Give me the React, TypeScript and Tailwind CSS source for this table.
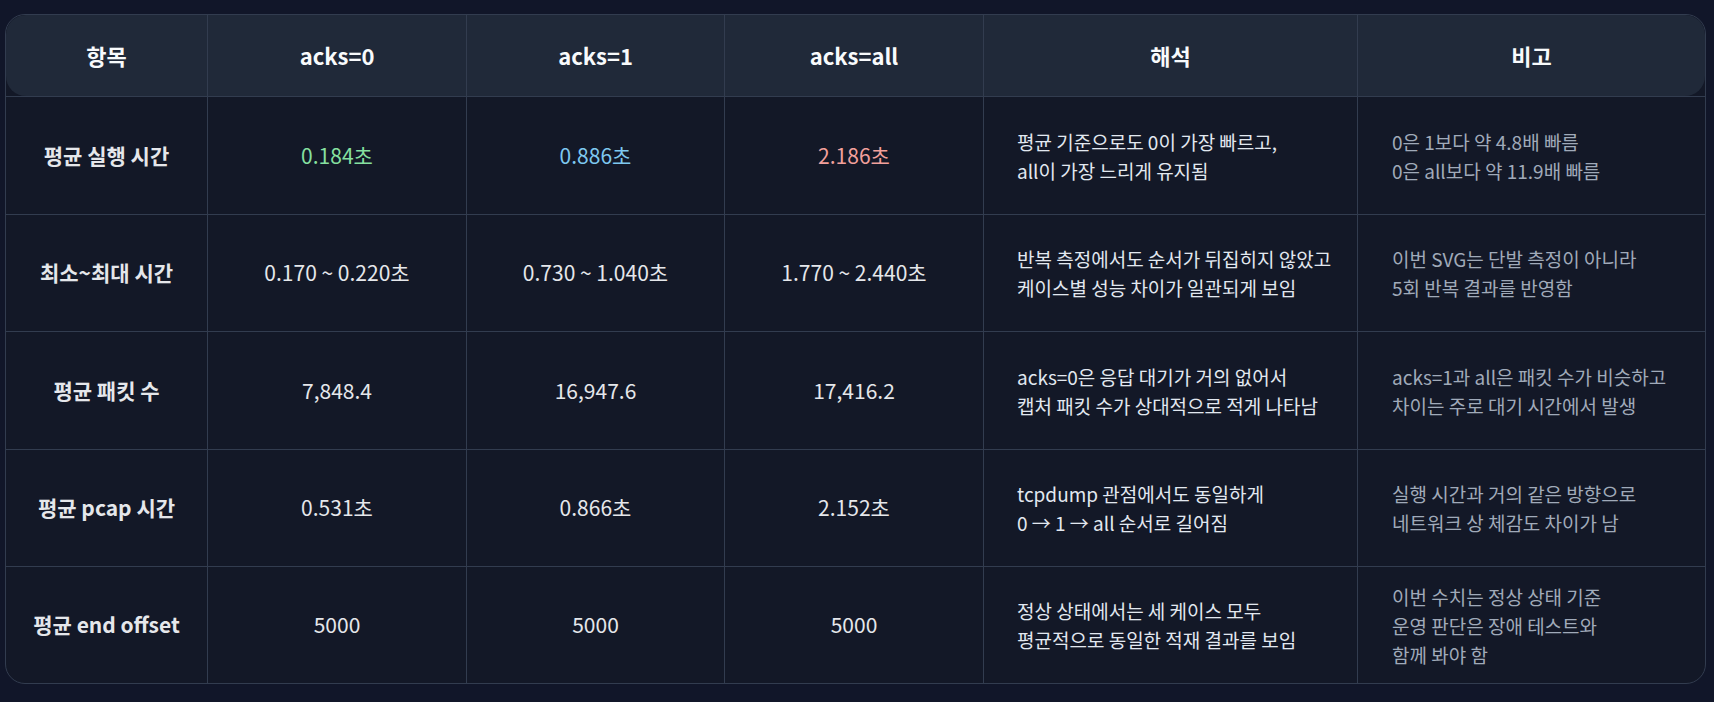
import React from "react";

type Row = {
  label: string;
  values: string[];
  tone?: string[];
  desc: string[];
  note: string[];
  h: string;
};

const ROWS: Row[] = [
  {
    label: "평균 실행 시간",
    values: ["0.184초", "0.886초", "2.186초"],
    tone: ["text-[#86e0a0]", "text-[#7ec8f0]", "text-[#f2a09c]"],
    desc: ["평균 기준으로도 0이 가장 빠르고,", "all이 가장 느리게 유지됨"],
    note: ["0은 1보다 약 4.8배 빠름", "0은 all보다 약 11.9배 빠름"],
    h: "h-[118px]",
  },
  {
    label: "최소~최대 시간",
    values: ["0.170 ~ 0.220초", "0.730 ~ 1.040초", "1.770 ~ 2.440초"],
    desc: ["반복 측정에서도 순서가 뒤집히지 않았고", "케이스별 성능 차이가 일관되게 보임"],
    note: ["이번 SVG는 단발 측정이 아니라", "5회 반복 결과를 반영함"],
    h: "h-[117px]",
  },
  {
    label: "평균 패킷 수",
    values: ["7,848.4", "16,947.6", "17,416.2"],
    desc: ["acks=0은 응답 대기가 거의 없어서", "캡처 패킷 수가 상대적으로 적게 나타남"],
    note: ["acks=1과 all은 패킷 수가 비슷하고", "차이는 주로 대기 시간에서 발생"],
    h: "h-[118px]",
  },
  {
    label: "평균 pcap 시간",
    values: ["0.531초", "0.866초", "2.152초"],
    desc: ["tcpdump 관점에서도 동일하게", "0 → 1 → all 순서로 길어짐"],
    note: ["실행 시간과 거의 같은 방향으로", "네트워크 상 체감도 차이가 남"],
    h: "h-[117px]",
  },
  {
    label: "평균 end offset",
    values: ["5000", "5000", "5000"],
    desc: ["정상 상태에서는 세 케이스 모두", "평균적으로 동일한 적재 결과를 보임"],
    note: ["이번 수치는 정상 상태 기준", "운영 판단은 장애 테스트와", "함께 봐야 함"],
    h: "h-[116px]",
  },
];

const HEADERS = ["항목", "acks=0", "acks=1", "acks=all", "해석", "비고"];

const COLS = "grid grid-cols-[201px_259px_258px_259px_374px_1fr]";

export default function App() {
  return (
    <div
      className="min-h-screen bg-[#111629] pt-[14px] pl-[5px] pr-[8px]"
      style={{ fontFamily: '"Noto Sans CJK KR", "Noto Sans", sans-serif' }}
    >
      <div className="overflow-hidden rounded-[20px] border border-[#323c4f] bg-[#131827]">
        {/* header */}
        <div className={`${COLS} h-[82px] border-b border-[#323c4f]`}>
          {HEADERS.map((h, i) => (
            <div
              key={h}
              className={`flex items-center justify-center bg-[#202939] text-[22px] font-bold text-[#f8fafc] ${
                i > 0 ? "border-l border-[#323c4f]" : "rounded-l-[20px]"
              } ${i === HEADERS.length - 1 ? "rounded-r-[20px]" : ""}`}
            >
              {h}
            </div>
          ))}
        </div>

        {ROWS.map((r, ri) => (
          <div
            key={r.label}
            className={`${COLS} ${r.h} ${ri < ROWS.length - 1 ? "border-b border-[#323c4f]" : ""}`}
          >
            <div className="flex items-center justify-center text-[21px] font-bold text-[#e5e7eb]">
              {r.label}
            </div>
            {r.values.map((v, vi) => (
              <div
                key={vi}
                className={`flex items-center justify-center border-l border-[#323c4f] text-[21px] ${
                  r.tone ? r.tone[vi] : "text-[#e5e7eb]"
                }`}
              >
                {v}
              </div>
            ))}
            <div className="flex flex-col justify-center border-l border-[#323c4f] pl-[33px] text-[19px] leading-[29px] text-[#e2e8f0]">
              {r.desc.map((d) => (
                <span key={d}>{d}</span>
              ))}
            </div>
            <div className="flex flex-col justify-center border-l border-[#323c4f] pl-[34px] text-[19px] leading-[29px] text-[#a0aab9]">
              {r.note.map((n) => (
                <span key={n}>{n}</span>
              ))}
            </div>
          </div>
        ))}
      </div>
    </div>
  );
}
